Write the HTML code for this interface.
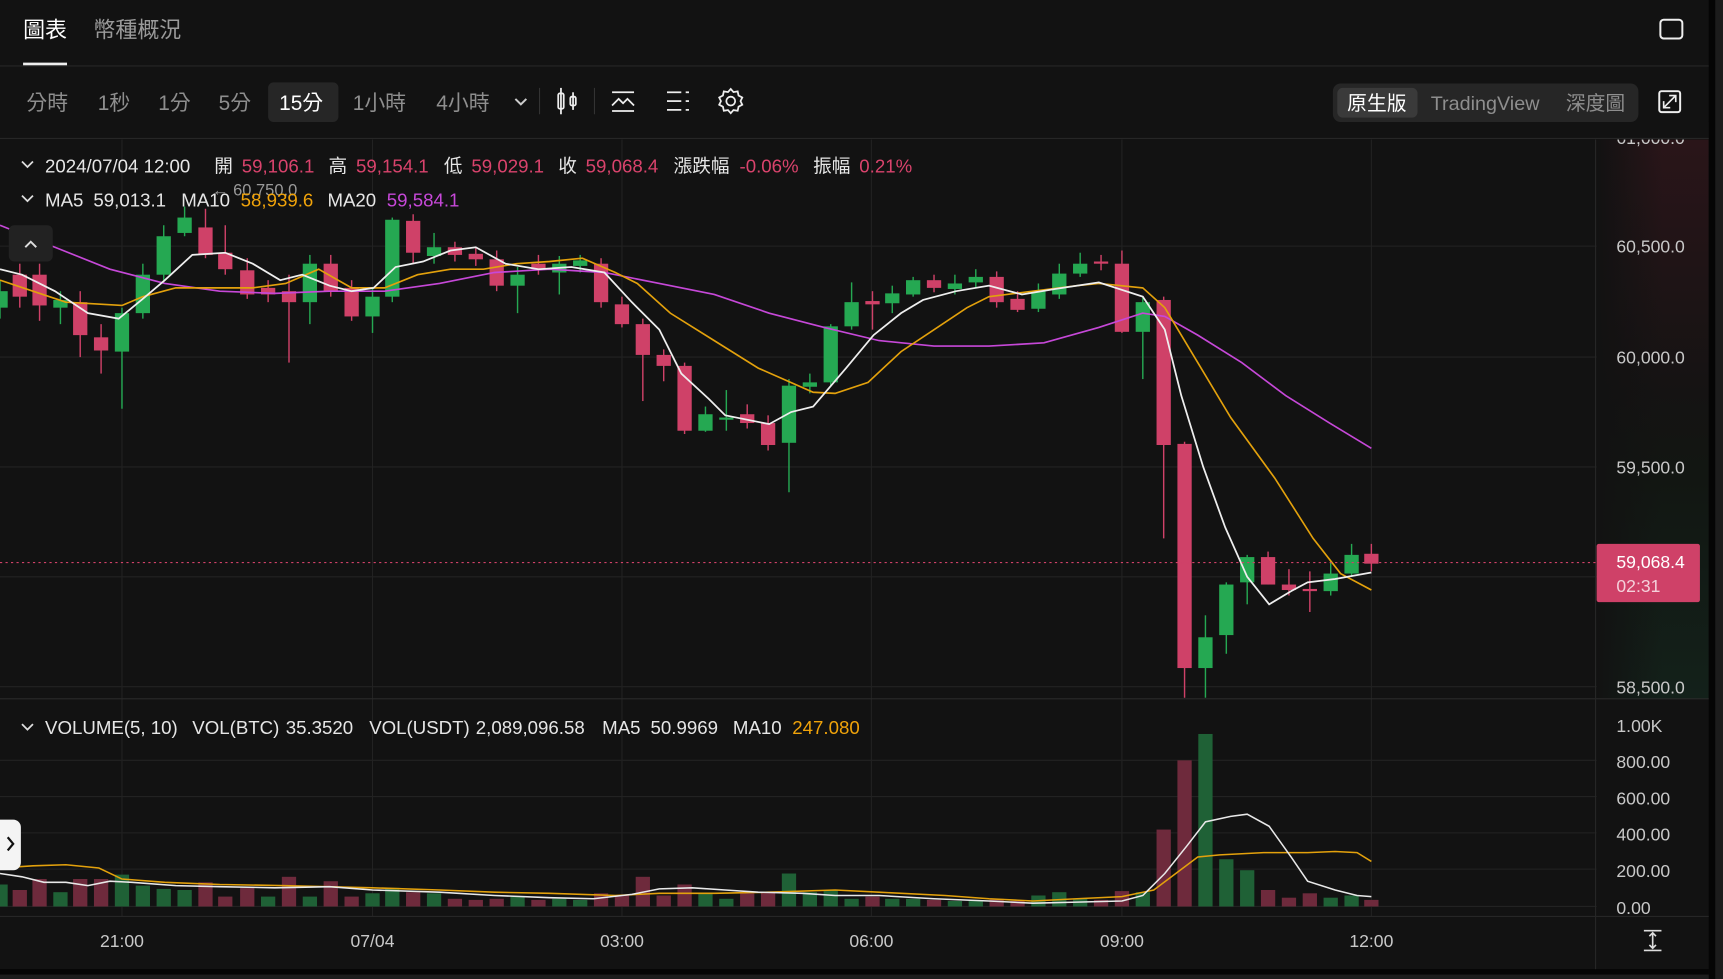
<!DOCTYPE html>
<html><head><meta charset="utf-8"><style>
html,body{margin:0;padding:0;background:#121212;overflow:hidden}
svg{display:block}
text{font-family:"Liberation Sans","Noto Sans CJK TC",sans-serif}
.ax{fill:#c8c8c8;font-size:16px}
.r{fill:#cf4168}.g{fill:#25a852}
.rw{stroke:#cf4168;stroke-width:1.3}.gw{stroke:#25a852;stroke-width:1.3}
.vr{fill:#6e2a3c}.vg{fill:#1f6136}
.grid{stroke:#222;stroke-width:1}
</style></head><body>
<svg width="1723" height="979" viewBox="0 0 1568 891" preserveAspectRatio="none" xmlns="http://www.w3.org/2000/svg">
<rect width="1568" height="891" fill="#121212"/>
<defs>
<linearGradient id="rg" x1="0" y1="0" x2="0" y2="1"><stop offset="0" stop-color="#2a1519"/><stop offset="0.45" stop-color="#151313"/><stop offset="0.6" stop-color="#121612"/><stop offset="1" stop-color="#13211a"/></linearGradient>
<linearGradient id="rgx" x1="0" y1="0" x2="1" y2="0"><stop offset="0" stop-color="#121212" stop-opacity="1"/><stop offset="1" stop-color="#121212" stop-opacity="0"/></linearGradient>
</defs>
<rect x="1453" y="127" width="102" height="509" fill="url(#rg)"/>
<rect x="1453" y="127" width="60" height="509" fill="url(#rgx)"/>
<rect x="1555" y="0" width="6" height="891" fill="#050505"/>
<rect x="1561" y="0" width="7" height="891" fill="#1c1c1c"/>
<rect x="0" y="882" width="1555" height="5" fill="#050505"/>
<rect x="0" y="887" width="1555" height="4" fill="#1c1c1c"/>

<text x="1471" y="131" class="ax">61,000.0</text>
<rect x="1453" y="111" width="102" height="16" fill="#121212"/>

<text x="21" y="34" fill="#fff" font-size="20">圖表</text>
<text x="85" y="34" fill="#9a9a9a" font-size="20">幣種概況</text>
<rect x="21" y="57" width="40" height="2.5" fill="#eee"/>
<line x1="0" y1="60" x2="1555" y2="60" stroke="#262626"/>
<rect x="1511" y="18" width="20" height="17" rx="3" fill="none" stroke="#eee" stroke-width="1.8"/>

<rect x="244" y="75" width="64" height="36" rx="5" fill="#262626"/>
<g font-size="19" fill="#8e8e8e">
<text x="24" y="100">分時</text><text x="89" y="100">1秒</text><text x="144" y="100">1分</text><text x="199" y="100">5分</text>
<text x="254" y="100" fill="#fff">15分</text><text x="321" y="100">1小時</text><text x="397" y="100">4小時</text>
</g>
<path d="M469 90 l5 5 l5 -5" fill="none" stroke="#ccc" stroke-width="1.8"/>
<line x1="491" y1="80" x2="491" y2="104" stroke="#333"/>
<g stroke="#eee" stroke-width="1.6" fill="none">
<rect x="508" y="85" width="5" height="14" rx="1.5"/><line x1="510.5" y1="80" x2="510.5" y2="104"/>
<rect x="519" y="88" width="5" height="8" rx="1.5"/><line x1="521.5" y1="84" x2="521.5" y2="100"/>
</g>
<line x1="541" y1="80" x2="541" y2="104" stroke="#333"/>
<g stroke="#eee" stroke-width="1.6" fill="none">
<line x1="557" y1="84" x2="577" y2="84"/><line x1="557" y1="101" x2="577" y2="101"/>
<path d="M557 96 l6 -6 l4 4 l4 -4 l6 6"/>
<line x1="607" y1="84" x2="620" y2="84"/><line x1="607" y1="92" x2="620" y2="92"/><line x1="607" y1="100" x2="620" y2="100"/>
<line x1="624" y1="84" x2="627" y2="84"/><line x1="624" y1="92" x2="627" y2="92"/><line x1="624" y1="100" x2="627" y2="100"/>
<circle cx="665" cy="92" r="4"/>
<path d="M665 81 l2.5 2.8 l3.8 -.6 l.8 3.7 l3.4 1.8 l-1.6 3.3 l1.6 3.3 l-3.4 1.8 l-.8 3.7 l-3.8 -.6 l-2.5 2.8 l-2.5 -2.8 l-3.8 .6 l-.8 -3.7 l-3.4 -1.8 l1.6 -3.3 l-1.6 -3.3 l3.4 -1.8 l.8 -3.7 l3.8 .6 z"/>
</g>
<rect x="1213" y="76" width="278" height="35" rx="7" fill="#262626"/>
<rect x="1217" y="80" width="73" height="27" rx="5" fill="#3a3a3a"/>
<text x="1226" y="100" fill="#fff" font-size="18">原生版</text>
<text x="1302" y="100" fill="#8e8e8e" font-size="18">TradingView</text>
<text x="1425" y="100" fill="#8e8e8e" font-size="18">深度圖</text>
<rect x="1510" y="83" width="19" height="19" rx="2" fill="none" stroke="#eee" stroke-width="1.8"/>
<path d="M1514 98 l11 -11 M1519 87 h6 v6 M1514 92 v6 h6" fill="none" stroke="#eee" stroke-width="1.5"/>
<line x1="0" y1="126" x2="1555" y2="126" stroke="#262626"/>

<g class="grid">
<line x1="0" y1="224" x2="1453" y2="224"/><line x1="0" y1="325" x2="1453" y2="325"/><line x1="0" y1="425" x2="1453" y2="425"/><line x1="0" y1="525" x2="1453" y2="525"/><line x1="0" y1="625" x2="1453" y2="625"/>
<line x1="0" y1="692" x2="1453" y2="692"/><line x1="0" y1="725" x2="1453" y2="725"/><line x1="0" y1="758" x2="1453" y2="758"/><line x1="0" y1="791" x2="1453" y2="791"/><line x1="0" y1="825" x2="1453" y2="825"/>
<line x1="111" y1="127" x2="111" y2="834"/><line x1="339" y1="127" x2="339" y2="834"/><line x1="566" y1="127" x2="566" y2="834"/><line x1="793" y1="127" x2="793" y2="834"/><line x1="1021" y1="127" x2="1021" y2="834"/><line x1="1248" y1="127" x2="1248" y2="834"/>
</g>
<line x1="0" y1="636" x2="1555" y2="636" stroke="#2a2a2a"/>
<line x1="0" y1="834" x2="1555" y2="834" stroke="#2a2a2a"/>
<line x1="1452" y1="127" x2="1452" y2="882" stroke="#262626"/>

<g class="ax">
<text x="1471" y="230">60,500.0</text><text x="1471" y="331">60,000.0</text><text x="1471" y="431">59,500.0</text><text x="1471" y="631">58,500.0</text>
<text x="1471" y="666">1.00K</text><text x="1471" y="699">800.00</text><text x="1471" y="732">600.00</text><text x="1471" y="765">400.00</text><text x="1471" y="798">200.00</text><text x="1471" y="832">0.00</text>
</g>
<g class="ax" text-anchor="middle">
<text x="111" y="862">21:00</text><text x="339" y="862">07/04</text><text x="566" y="862">03:00</text><text x="793" y="862">06:00</text><text x="1021" y="862">09:00</text><text x="1248" y="862">12:00</text>
</g>
<g stroke="#ddd" stroke-width="1.5" fill="none"><line x1="1496" y1="847" x2="1512" y2="847"/><line x1="1496" y1="865" x2="1512" y2="865"/><path d="M1504 849 v14 M1501 852 l3 -3 l3 3 M1501 860 l3 3 l3 -3"/></g>

<g>
<line class="gw" x1="0" y1="255" x2="0" y2="290"/><rect class="g" x="-6" y="265" width="13" height="15"/>
<line class="rw" x1="18" y1="240" x2="18" y2="280"/><rect class="r" x="11.5" y="250" width="13" height="20"/>
<line class="rw" x1="36" y1="240" x2="36" y2="292"/><rect class="r" x="29.5" y="250" width="13" height="28"/>
<line class="gw" x1="55" y1="265" x2="55" y2="295"/><rect class="g" x="48.5" y="273" width="13" height="7"/>
<line class="rw" x1="73" y1="265" x2="73" y2="325"/><rect class="r" x="66.5" y="275" width="13" height="30"/>
<line class="rw" x1="92" y1="295" x2="92" y2="340"/><rect class="r" x="85.5" y="307" width="13" height="12"/>
<line class="gw" x1="111" y1="280" x2="111" y2="372"/><rect class="g" x="104.5" y="285" width="13" height="35"/>
<line class="gw" x1="130" y1="240" x2="130" y2="290"/><rect class="g" x="123.5" y="250" width="13" height="35"/>
<line class="gw" x1="149" y1="205" x2="149" y2="255"/><rect class="g" x="142.5" y="215" width="13" height="35"/>
<line class="gw" x1="168" y1="188" x2="168" y2="215"/><rect class="g" x="161.5" y="198" width="13" height="14"/>
<line class="rw" x1="187" y1="190" x2="187" y2="235"/><rect class="r" x="180.5" y="207" width="13" height="25"/>
<line class="rw" x1="205" y1="205" x2="205" y2="250"/><rect class="r" x="198.5" y="230" width="13" height="15"/>
<line class="rw" x1="225" y1="235" x2="225" y2="272"/><rect class="r" x="218.5" y="246" width="13" height="22"/>
<line class="rw" x1="244" y1="255" x2="244" y2="275"/><rect class="r" x="237.5" y="262" width="13" height="6"/>
<line class="rw" x1="263" y1="250" x2="263" y2="330"/><rect class="r" x="256.5" y="265" width="13" height="10"/>
<line class="gw" x1="282" y1="232" x2="282" y2="295"/><rect class="g" x="275.5" y="240" width="13" height="35"/>
<line class="rw" x1="301" y1="232" x2="301" y2="270"/><rect class="r" x="294.5" y="240" width="13" height="25"/>
<line class="rw" x1="320" y1="255" x2="320" y2="292"/><rect class="r" x="313.5" y="262" width="13" height="26"/>
<line class="gw" x1="339" y1="262" x2="339" y2="303"/><rect class="g" x="332.5" y="270" width="13" height="18"/>
<line class="gw" x1="357" y1="198" x2="357" y2="275"/><rect class="g" x="350.5" y="200" width="13" height="70"/>
<line class="rw" x1="376" y1="195" x2="376" y2="240"/><rect class="r" x="369.5" y="201" width="13" height="29"/>
<line class="gw" x1="395" y1="212" x2="395" y2="240"/><rect class="g" x="388.5" y="225" width="13" height="8"/>
<line class="rw" x1="414" y1="220" x2="414" y2="238"/><rect class="r" x="407.5" y="225" width="13" height="7"/>
<line class="rw" x1="433" y1="225" x2="433" y2="242"/><rect class="r" x="426.5" y="231" width="13" height="5"/>
<line class="rw" x1="452" y1="228" x2="452" y2="265"/><rect class="r" x="445.5" y="236" width="13" height="24"/>
<line class="gw" x1="471" y1="243" x2="471" y2="285"/><rect class="g" x="464.5" y="250" width="13" height="10"/>
<line class="rw" x1="490" y1="232" x2="490" y2="250"/><rect class="r" x="483.5" y="240" width="13" height="5"/>
<line class="gw" x1="509" y1="233" x2="509" y2="268"/><rect class="g" x="502.5" y="240" width="13" height="8"/>
<line class="gw" x1="528" y1="232" x2="528" y2="248"/><rect class="g" x="521.5" y="237" width="13" height="5"/>
<line class="rw" x1="547" y1="235" x2="547" y2="280"/><rect class="r" x="540.5" y="240" width="13" height="35"/>
<line class="rw" x1="566" y1="270" x2="566" y2="298"/><rect class="r" x="559.5" y="277" width="13" height="18"/>
<line class="rw" x1="585" y1="290" x2="585" y2="365"/><rect class="r" x="578.5" y="295" width="13" height="28"/>
<line class="rw" x1="604" y1="318" x2="604" y2="347"/><rect class="r" x="597.5" y="323" width="13" height="10"/>
<line class="rw" x1="623" y1="330" x2="623" y2="395"/><rect class="r" x="616.5" y="333" width="13" height="59"/>
<line class="gw" x1="642" y1="370" x2="642" y2="393"/><rect class="g" x="635.5" y="377" width="13" height="15"/>
<line class="gw" x1="661" y1="355" x2="661" y2="392"/><rect class="g" x="654.5" y="380" width="13" height="2"/>
<line class="rw" x1="680" y1="368" x2="680" y2="390"/><rect class="r" x="673.5" y="377" width="13" height="8"/>
<line class="rw" x1="699" y1="378" x2="699" y2="410"/><rect class="r" x="692.5" y="385" width="13" height="20"/>
<line class="gw" x1="718" y1="345" x2="718" y2="448"/><rect class="g" x="711.5" y="351" width="13" height="52"/>
<line class="gw" x1="737" y1="340" x2="737" y2="358"/><rect class="g" x="730.5" y="348" width="13" height="4"/>
<line class="gw" x1="756" y1="295" x2="756" y2="352"/><rect class="g" x="749.5" y="297" width="13" height="51"/>
<line class="gw" x1="775" y1="257" x2="775" y2="300"/><rect class="g" x="768.5" y="275" width="13" height="22"/>
<line class="rw" x1="794" y1="265" x2="794" y2="300"/><rect class="r" x="787.5" y="274" width="13" height="3"/>
<line class="gw" x1="812" y1="260" x2="812" y2="285"/><rect class="g" x="805.5" y="267" width="13" height="9"/>
<line class="gw" x1="831" y1="252" x2="831" y2="270"/><rect class="g" x="824.5" y="255" width="13" height="13"/>
<line class="rw" x1="850" y1="250" x2="850" y2="266"/><rect class="r" x="843.5" y="255" width="13" height="7"/>
<line class="gw" x1="869" y1="250" x2="869" y2="268"/><rect class="g" x="862.5" y="258" width="13" height="5"/>
<line class="gw" x1="888" y1="245" x2="888" y2="262"/><rect class="g" x="881.5" y="252" width="13" height="5"/>
<line class="rw" x1="907" y1="247" x2="907" y2="280"/><rect class="r" x="900.5" y="252" width="13" height="23"/>
<line class="rw" x1="926" y1="265" x2="926" y2="284"/><rect class="r" x="919.5" y="272" width="13" height="10"/>
<line class="gw" x1="945" y1="258" x2="945" y2="284"/><rect class="g" x="938.5" y="265" width="13" height="16"/>
<line class="gw" x1="964" y1="240" x2="964" y2="272"/><rect class="g" x="957.5" y="249" width="13" height="19"/>
<line class="gw" x1="983" y1="230" x2="983" y2="252"/><rect class="g" x="976.5" y="240" width="13" height="9"/>
<line class="rw" x1="1002" y1="232" x2="1002" y2="246"/><rect class="r" x="995.5" y="238" width="13" height="2"/>
<line class="rw" x1="1021" y1="228" x2="1021" y2="303"/><rect class="r" x="1014.5" y="240" width="13" height="62"/>
<line class="gw" x1="1040" y1="270" x2="1040" y2="345"/><rect class="g" x="1033.5" y="275" width="13" height="27"/>
<line class="rw" x1="1059" y1="270" x2="1059" y2="490"/><rect class="r" x="1052.5" y="273" width="13" height="132"/>
<line class="rw" x1="1078" y1="402" x2="1078" y2="635"/><rect class="r" x="1071.5" y="404" width="13" height="204"/>
<line class="gw" x1="1097" y1="560" x2="1097" y2="635"/><rect class="g" x="1090.5" y="580" width="13" height="28"/>
<line class="gw" x1="1116" y1="530" x2="1116" y2="595"/><rect class="g" x="1109.5" y="532" width="13" height="46"/>
<line class="gw" x1="1135" y1="505" x2="1135" y2="550"/><rect class="g" x="1128.5" y="507" width="13" height="23"/>
<line class="rw" x1="1154" y1="502" x2="1154" y2="532"/><rect class="r" x="1147.5" y="507" width="13" height="25"/>
<line class="rw" x1="1173" y1="518" x2="1173" y2="542"/><rect class="r" x="1166.5" y="532" width="13" height="5"/>
<line class="rw" x1="1192" y1="520" x2="1192" y2="557"/><rect class="r" x="1185.5" y="536" width="13" height="2"/>
<line class="gw" x1="1211" y1="510" x2="1211" y2="542"/><rect class="g" x="1204.5" y="522" width="13" height="16"/>
<line class="gw" x1="1230" y1="495" x2="1230" y2="525"/><rect class="g" x="1223.5" y="505" width="13" height="17"/>
<line class="rw" x1="1248" y1="495" x2="1248" y2="520"/><rect class="r" x="1241.5" y="504" width="13" height="9"/>
</g>

<polyline fill="none" stroke="#c648d8" stroke-width="1.5" points="0,205 50,225 100,245 150,258 200,265 250,267 300,265 350,265 400,258 450,248 500,245 550,248 600,258 650,268 700,285 750,298 800,310 850,315 900,315 950,312 1000,298 1040,285 1060,288 1090,305 1130,330 1170,360 1210,385 1248,408"/>
<polyline fill="none" stroke="#e3a10c" stroke-width="1.5" points="0,255 30,265 60,275 111,278 130,270 160,262 200,262 230,262 260,258 290,245 320,262 350,262 380,250 410,245 440,245 470,240 500,238 530,235 560,248 580,258 610,285 650,310 690,335 740,357 760,358 790,348 820,320 850,300 880,280 900,270 940,265 980,260 1000,258 1040,262 1060,280 1090,330 1120,380 1160,435 1195,490 1220,522 1248,537"/>
<polyline fill="none" stroke="#eee" stroke-width="1.6" points="0,245 20,250 50,265 80,285 108,290 130,272 150,255 175,232 205,230 230,240 255,255 275,250 300,260 320,265 340,262 360,243 385,238 410,228 433,225 460,240 490,245 520,243 550,248 575,275 600,300 620,340 645,363 660,378 700,386 720,375 740,370 770,335 795,305 820,285 840,273 870,265 900,260 930,268 960,263 1000,257 1040,270 1060,300 1075,360 1095,425 1115,480 1135,525 1155,550 1175,538 1190,530 1215,527 1248,521"/>

<line x1="0" y1="512" x2="1453" y2="512" stroke="#cf4168" stroke-dasharray="2,3" stroke-width="1"/>
<rect x="1453" y="495" width="94" height="53" rx="2" fill="#cf4168"/>
<text x="1471" y="517" fill="#fff" font-size="16">59,068.4</text>
<text x="1471" y="539" fill="#f4d0da" font-size="16">02:31</text>

<g fill="none" stroke="#ddd" stroke-width="1.6"><path d="M20 147 l5 5 l5 -5"/><path d="M20 178 l5 5 l5 -5"/><path d="M20 659 l5 5 l5 -5"/></g>
<g font-size="17" fill="#e6e6e6">
<text x="41" y="157">2024/07/04 12:00</text><text x="195" y="157">開</text><text x="299" y="157">高</text><text x="404" y="157">低</text><text x="508" y="157">收</text><text x="613" y="157">漲跌幅</text><text x="740" y="157">振幅</text>
</g>
<g font-size="17" fill="#d9436c">
<text x="220" y="157">59,106.1</text><text x="324" y="157">59,154.1</text><text x="429" y="157">59,029.1</text><text x="533" y="157">59,068.4</text><text x="673" y="157">-0.06%</text><text x="782" y="157">0.21%</text>
</g>
<text x="193" y="178" fill="#999" font-size="15">← 60,750.0</text>
<g font-size="17" fill="#e6e6e6">
<text x="41" y="188">MA5</text><text x="85" y="188">59,013.1</text><text x="165" y="188">MA10</text><text x="298" y="188">MA20</text>
</g>
<text x="219" y="188" fill="#f0a30a" font-size="17">58,939.6</text>
<text x="352" y="188" fill="#c648d8" font-size="17">59,584.1</text>
<g font-size="17" fill="#e6e6e6">
<text x="41" y="668">VOLUME(5, 10)</text><text x="175" y="668">VOL(BTC)</text><text x="260" y="668">35.3520</text><text x="336" y="668">VOL(USDT)</text><text x="433" y="668">2,089,096.58</text><text x="548" y="668">MA5</text><text x="592" y="668">50.9969</text><text x="667" y="668">MA10</text>
</g>
<text x="721" y="668" fill="#f0a30a" font-size="17">247.080</text>

<rect x="8" y="205" width="40" height="33" rx="5" fill="#222"/>
<path d="M23 225 l5 -5 l5 5" fill="none" stroke="#ddd" stroke-width="1.8"/>

<g>
<rect class="vg" x="-6" y="805" width="13" height="20"/><rect class="vr" x="11.5" y="810" width="13" height="15"/><rect class="vr" x="29.5" y="800" width="13" height="25"/><rect class="vg" x="48.5" y="812" width="13" height="13"/>
<rect class="vr" x="66.5" y="800" width="13" height="25"/><rect class="vr" x="85.5" y="800" width="13" height="25"/><rect class="vg" x="104.5" y="796" width="13" height="29"/><rect class="vg" x="123.5" y="806" width="13" height="19"/>
<rect class="vg" x="142.5" y="809" width="13" height="16"/><rect class="vg" x="161.5" y="810" width="13" height="15"/><rect class="vr" x="180.5" y="803" width="13" height="22"/><rect class="vr" x="198.5" y="816" width="13" height="9"/>
<rect class="vr" x="218.5" y="808" width="13" height="17"/><rect class="vg" x="237.5" y="816" width="13" height="9"/><rect class="vr" x="256.5" y="798" width="13" height="27"/><rect class="vg" x="275.5" y="816" width="13" height="9"/>
<rect class="vr" x="294.5" y="802" width="13" height="23"/><rect class="vr" x="313.5" y="816" width="13" height="9"/><rect class="vg" x="332.5" y="813" width="13" height="12"/><rect class="vg" x="350.5" y="808" width="13" height="17"/>
<rect class="vr" x="369.5" y="812" width="13" height="13"/><rect class="vg" x="388.5" y="813" width="13" height="12"/><rect class="vr" x="407.5" y="818" width="13" height="7"/><rect class="vr" x="426.5" y="819" width="13" height="6"/>
<rect class="vr" x="445.5" y="818" width="13" height="7"/><rect class="vg" x="464.5" y="816" width="13" height="9"/><rect class="vr" x="483.5" y="819" width="13" height="6"/><rect class="vg" x="502.5" y="818" width="13" height="7"/>
<rect class="vg" x="521.5" y="819" width="13" height="6"/><rect class="vr" x="540.5" y="813" width="13" height="12"/><rect class="vr" x="559.5" y="815" width="13" height="10"/><rect class="vr" x="578.5" y="798" width="13" height="27"/>
<rect class="vr" x="597.5" y="815" width="13" height="10"/><rect class="vr" x="616.5" y="805" width="13" height="20"/><rect class="vg" x="635.5" y="813" width="13" height="12"/><rect class="vg" x="654.5" y="818" width="13" height="7"/>
<rect class="vr" x="673.5" y="813" width="13" height="12"/><rect class="vr" x="692.5" y="812" width="13" height="13"/><rect class="vg" x="711.5" y="795" width="13" height="30"/><rect class="vg" x="730.5" y="812" width="13" height="13"/>
<rect class="vg" x="749.5" y="810" width="13" height="15"/><rect class="vg" x="768.5" y="818" width="13" height="7"/><rect class="vr" x="787.5" y="816" width="13" height="9"/><rect class="vg" x="805.5" y="818" width="13" height="7"/>
<rect class="vg" x="824.5" y="818" width="13" height="7"/><rect class="vr" x="843.5" y="819" width="13" height="6"/><rect class="vg" x="862.5" y="820" width="13" height="5"/><rect class="vg" x="881.5" y="820" width="13" height="5"/>
<rect class="vr" x="900.5" y="818" width="13" height="7"/><rect class="vr" x="919.5" y="820" width="13" height="5"/><rect class="vg" x="938.5" y="815" width="13" height="10"/><rect class="vg" x="957.5" y="812" width="13" height="13"/>
<rect class="vg" x="976.5" y="818" width="13" height="7"/><rect class="vr" x="995.5" y="819" width="13" height="6"/><rect class="vr" x="1014.5" y="811" width="13" height="14"/><rect class="vg" x="1033.5" y="812" width="13" height="13"/>
<rect class="vr" x="1052.5" y="755" width="13" height="70"/><rect class="vr" x="1071.5" y="692" width="13" height="133"/><rect class="vg" x="1090.5" y="668" width="13" height="157"/><rect class="vg" x="1109.5" y="782" width="13" height="43"/>
<rect class="vg" x="1128.5" y="792" width="13" height="33"/><rect class="vr" x="1147.5" y="810" width="13" height="15"/><rect class="vr" x="1166.5" y="817" width="13" height="8"/><rect class="vr" x="1185.5" y="813" width="13" height="12"/>
<rect class="vg" x="1204.5" y="817" width="13" height="8"/><rect class="vg" x="1223.5" y="815" width="13" height="10"/><rect class="vr" x="1241.5" y="819" width="13" height="6"/>
</g>
<polyline fill="none" stroke="#e3a10c" stroke-width="1.4" points="0,790 30,788 60,787 90,790 111,800 150,803 200,805 260,806 339,808 400,810 450,812 500,813 560,815 600,813 650,813 700,812 760,810 800,812 860,815 900,818 940,820 980,818 1021,816 1050,810 1070,795 1090,780 1110,778 1150,776 1190,776 1215,775 1235,776 1248,784"/>
<polyline fill="none" stroke="#e8e8e8" stroke-width="1.4" points="0,795 20,798 40,803 60,803 80,806 100,802 120,803 160,806 200,807 250,808 300,807 339,810 400,812 450,815 500,817 540,818 575,814 600,809 630,808 660,810 690,812 730,813 760,815 800,815 850,818 900,820 940,822 980,821 1021,820 1040,815 1060,795 1080,770 1097,748 1120,743 1135,741 1155,752 1175,780 1190,802 1215,810 1235,815 1248,816"/>

<rect x="-8" y="746" width="27" height="46" rx="7" fill="#f4f4f4"/>
<path d="M7 762 l5 6 l-5 6" fill="none" stroke="#111" stroke-width="2"/>
</svg>
</body></html>
